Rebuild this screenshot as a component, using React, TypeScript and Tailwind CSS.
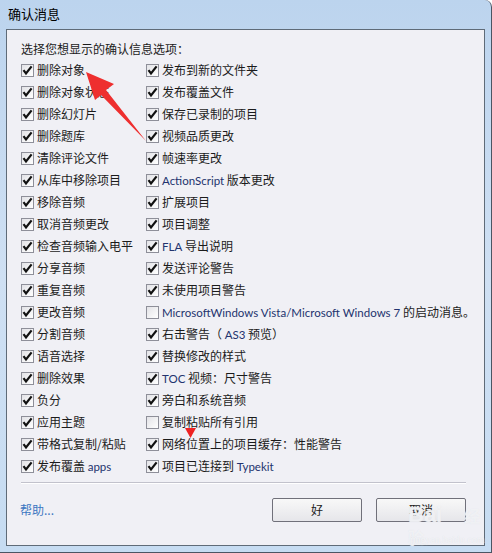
const col1: [string, boolean][] = [
  ["删除对象", true],
  ["删除对象状态", true],
  ["删除幻灯片", true],
  ["删除题库", true],
  ["清除评论文件", true],
  ["从库中移除项目", true],
  ["移除音频", true],
  ["取消音频更改", true],
  ["检查音频输入电平", true],
  ["分享音频", true],
  ["重复音频", true],
  ["更改音频", true],
  ["分割音频", true],
  ["语音选择", true],
  ["删除效果", true],
  ["负分", true],
  ["应用主题", true],
  ["带格式复制/粘贴", true],
  ["发布覆盖 |apps|", true],
];

const col2: [string, boolean][] = [
  ["发布到新的文件夹", true],
  ["发布覆盖文件", true],
  ["保存已录制的项目", true],
  ["视频品质更改", true],
  ["帧速率更改", true],
  ["|ActionScript| 版本更改", true],
  ["扩展项目", true],
  ["项目调整", true],
  ["|FLA| 导出说明", true],
  ["发送评论警告", true],
  ["未使用项目警告", true],
  ["|MicrosoftWindows Vista/Microsoft Windows 7| 的启动消息。", false],
  ["右击警告（ |AS3| 预览）", true],
  ["替换修改的样式", true],
  ["|TOC| 视频：尺寸警告", true],
  ["旁白和系统音频", true],
  ["复制粘贴所有引用", false],
  ["网络位置上的项目缓存：性能警告", true],
  ["项目已连接到 |Typekit|", true],
];

// parts between pipes are latin runs, drawn a bit bluish like the cleartype text
function Label({ text }: { text: string }) {
  const parts = text.split("|");
  return (
    <span className="whitespace-nowrap">
      {parts.map((p, i) =>
        i % 2 === 1 ? (
          <span key={i} className="text-[#23336e] font-['Lato','Noto_Sans',sans-serif] text-[11.5px]">
            {p}
          </span>
        ) : (
          <span key={i}>{p}</span>
        )
      )}
    </span>
  );
}

function Check({ on }: { on: boolean }) {
  return (
    <span className="w-[13px] h-[13px] shrink-0 border border-[#8e8f99] bg-gradient-to-br from-[#e3e3e7] to-[#ffffff] flex items-center justify-center">
      {on && (
        <svg width="11" height="11" viewBox="0 0 11 11">
          <path d="M1.5 5.2 L4 8.5 L9.6 1.4" fill="none" stroke="#111" strokeWidth="2.2" />
        </svg>
      )}
    </span>
  );
}

function Row({ item }: { item: [string, boolean] }) {
  return (
    <div className="h-[22px] flex items-center gap-[3px]">
      <Check on={item[1]} />
      <Label text={item[0]} />
    </div>
  );
}

export default function App() {
  return (
    <div className="w-[492px] h-[553px] relative overflow-hidden bg-white font-['Noto_Sans_CJK_SC','Noto_Sans',sans-serif] text-[12px] text-[#1b1b1b]">
      <div className="w-[492px] h-[553px] border border-[#4b5563] border-t-0 border-l-0 rounded-tr-[7px] bg-gradient-to-b from-[#bcd4ee] via-[#cfe0f3] to-[#c6dcf2] flex flex-col">
        <div className="h-[29px] pl-[8px] pt-[4px] leading-[20px] text-[13px] text-black">确认消息</div>
        <div className="mx-[6px] h-[517px] border border-[#5f6b78] bg-[#f0f0f5] px-[14px] pt-[10px] flex flex-col">
          <div className="h-[18px] leading-[18px] mb-[1px]">选择您想显示的确认信息选项：</div>
          <div className="grid grid-cols-[125px_1fr]">
            <div className="flex flex-col">
              {col1.map((it, i) => (
                <Row key={i} item={it} />
              ))}
            </div>
            <div className="flex flex-col">
              {col2.map((it, i) => (
                <Row key={i} item={it} />
              ))}
            </div>
          </div>
          <div className="mt-[5px] mr-[4px] h-[2px] border-t border-[#c2c2cc] border-b border-b-white" />
          <div className="mt-[14px] flex items-center">
            <span className="text-[#3b77c1] ml-[-1px]">帮助...</span>
            <div className="ml-auto mr-[4px] flex gap-[14px]">
              <button className="w-[90px] h-[24px] border border-[#70707a] rounded-[2px] bg-gradient-to-b from-[#f8f8f8] to-[#e6e6ea] text-[12px]">好</button>
              <button className="w-[90px] h-[24px] border border-[#70707a] rounded-[2px] bg-gradient-to-b from-[#f8f8f8] to-[#e6e6ea] text-[12px]">取消</button>
            </div>
          </div>
        </div>
      </div>

      {/* red annotation arrow over the list */}
      <svg className="absolute left-0 top-0 pointer-events-none" width="492" height="553">
        <path d="M86 72 L114 84 L106 90 L146 141 L101 95 L95 100 Z" fill="#ee2f2f" />
        <path d="M185 428 L196 428 L190.5 438 Z" fill="#ee2222" />
      </svg>

      {/* watermark */}
      <div className="absolute left-[408px] top-[504px] pointer-events-none text-white/50 font-bold text-[22px] leading-none [text-shadow:0_0_1px_#dfe2e8] font-['Liberation_Sans',sans-serif]">
        Bai<span className="text-[16px] ml-[22px] font-['Noto_Sans_CJK_SC',sans-serif]">经验</span>
      </div>
      <div className="absolute left-[410px] top-[532px] pointer-events-none text-white/60 text-[10px] [text-shadow:0_0_1px_#d9dce2] font-['Liberation_Serif',serif]">
        jingyan.baidu.com
      </div>
    </div>
  );
}
